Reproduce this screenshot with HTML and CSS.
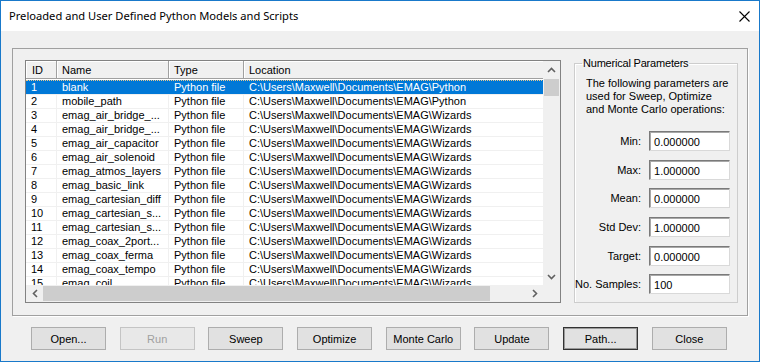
FILE: index.html
```html
<!DOCTYPE html>
<html>
<head>
<meta charset="utf-8">
<link rel="stylesheet" href="styles.css">
</head>
<body>
<div class="window">
  <div class="titlebar">
    <span class="title">Preloaded and User Defined Python Models and Scripts</span>
    <svg class="close" width="11" height="11" viewBox="0 0 11 11"><path d="M0.5 0.5L10.5 10.5M10.5 0.5L0.5 10.5" stroke="#000" stroke-width="1.1" fill="none"/></svg>
  </div>
  <div class="content">
    <div class="group">
      <div class="listview">
        <div class="lv-main">
          <div class="lv-header">
            <span class="hcell">ID</span><span class="hcell">Name</span><span class="hcell">Type</span><span class="hcell">Location</span>
          </div>
          <div class="lv-row selected"><span>1</span><span>blank</span><span>Python file</span><span>C:\Users\Maxwell\Documents\EMAG\Python</span></div>
          <div class="lv-row"><span>2</span><span>mobile_path</span><span>Python file</span><span>C:\Users\Maxwell\Documents\EMAG\Python</span></div>
          <div class="lv-row"><span>3</span><span>emag_air_bridge_...</span><span>Python file</span><span>C:\Users\Maxwell\Documents\EMAG\Wizards</span></div>
          <div class="lv-row"><span>4</span><span>emag_air_bridge_...</span><span>Python file</span><span>C:\Users\Maxwell\Documents\EMAG\Wizards</span></div>
          <div class="lv-row"><span>5</span><span>emag_air_capacitor</span><span>Python file</span><span>C:\Users\Maxwell\Documents\EMAG\Wizards</span></div>
          <div class="lv-row"><span>6</span><span>emag_air_solenoid</span><span>Python file</span><span>C:\Users\Maxwell\Documents\EMAG\Wizards</span></div>
          <div class="lv-row"><span>7</span><span>emag_atmos_layers</span><span>Python file</span><span>C:\Users\Maxwell\Documents\EMAG\Wizards</span></div>
          <div class="lv-row"><span>8</span><span>emag_basic_link</span><span>Python file</span><span>C:\Users\Maxwell\Documents\EMAG\Wizards</span></div>
          <div class="lv-row"><span>9</span><span>emag_cartesian_diff</span><span>Python file</span><span>C:\Users\Maxwell\Documents\EMAG\Wizards</span></div>
          <div class="lv-row"><span>10</span><span>emag_cartesian_s...</span><span>Python file</span><span>C:\Users\Maxwell\Documents\EMAG\Wizards</span></div>
          <div class="lv-row"><span>11</span><span>emag_cartesian_s...</span><span>Python file</span><span>C:\Users\Maxwell\Documents\EMAG\Wizards</span></div>
          <div class="lv-row"><span>12</span><span>emag_coax_2port...</span><span>Python file</span><span>C:\Users\Maxwell\Documents\EMAG\Wizards</span></div>
          <div class="lv-row"><span>13</span><span>emag_coax_ferma</span><span>Python file</span><span>C:\Users\Maxwell\Documents\EMAG\Wizards</span></div>
          <div class="lv-row"><span>14</span><span>emag_coax_tempo</span><span>Python file</span><span>C:\Users\Maxwell\Documents\EMAG\Wizards</span></div>
          <div class="lv-row"><span>15</span><span>emag_coil</span><span>Python file</span><span>C:\Users\Maxwell\Documents\EMAG\Wizards</span></div>
        </div>
        <div class="vscroll">
          <div class="sb-btn"><svg width="9" height="6" viewBox="0 0 9 6"><path d="M1 5L4.5 1.5L8 5" stroke="#606060" stroke-width="1.6" fill="none"/></svg></div>
          <div class="vthumb"></div>
          <div class="vtrack"></div>
          <div class="sb-btn"><svg width="9" height="6" viewBox="0 0 9 6"><path d="M1 1L4.5 4.5L8 1" stroke="#606060" stroke-width="1.6" fill="none"/></svg></div>
        </div>
        <div class="hscroll">
          <div class="sb-btn"><svg width="6" height="9" viewBox="0 0 6 9"><path d="M5 1L1.5 4.5L5 8" stroke="#606060" stroke-width="1.6" fill="none"/></svg></div>
          <div class="hthumb"></div>
          <div class="htrack"></div>
          <div class="sb-btn"><svg width="6" height="9" viewBox="0 0 6 9"><path d="M1 1L4.5 4.5L1 8" stroke="#606060" stroke-width="1.6" fill="none"/></svg></div>
        </div>
        <div class="corner"></div>
      </div>
      <fieldset class="params">
        <legend>Numerical Parameters</legend>
        <p class="desc">The following parameters are<br>used for Sweep, Optimize<br>and Monte Carlo operations:</p>
        <div class="fields">
          <label>Min:</label><div class="input">0.000000</div>
          <label>Max:</label><div class="input">1.000000</div>
          <label>Mean:</label><div class="input">0.000000</div>
          <label>Std Dev:</label><div class="input">1.000000</div>
          <label>Target:</label><div class="input">0.000000</div>
          <label>No. Samples:</label><div class="input">100</div>
        </div>
      </fieldset>
    </div>
    <div class="buttons">
      <button class="btn">Open...</button>
      <button class="btn" disabled>Run</button>
      <button class="btn">Sweep</button>
      <button class="btn">Optimize</button>
      <button class="btn">Monte Carlo</button>
      <button class="btn">Update</button>
      <button class="btn default">Path...</button>
      <button class="btn">Close</button>
    </div>
  </div>
</div>
</body>
</html>
```

FILE: styles.css
```css
* { box-sizing: border-box; }
html, body { margin: 0; padding: 0; }
body {
  width: 760px;
  height: 362px;
  overflow: hidden;
  font-family: "Liberation Sans", Arial, sans-serif;
  font-size: 11px;
  color: #000;
}
.window {
  width: 760px;
  height: 362px;
  border: 1px solid #1979ca;
  background: #f0f0f0;
  display: flex;
  flex-direction: column;
}
.titlebar {
  height: 30px;
  flex: none;
  background: #fff;
  display: flex;
  align-items: center;
  justify-content: space-between;
  padding: 0 9px 0 8px;
}
.title {
  font-family: "Noto Sans", sans-serif;
  font-size: 11.15px;
  color: #000;
  margin-top: -1px;
}
.close { display: block; margin-top: 1px; }
.content {
  flex: 1;
  padding-top: 17px;
}
.group {
  margin: 0 11px;
  height: 268px;
  border: 1px solid #a0a0a0;
  box-shadow: 1px 1px 0 #fff;
  display: flex;
  align-items: flex-start;
  gap: 13px;
  padding: 11px 9px 0 12px;
}
.listview {
  width: 536px;
  height: 243px;
  flex: none;
  border: 1px solid #828282;
  background: #fff;
  display: grid;
  grid-template-columns: 517px 17px;
  grid-template-rows: 224px 17px;
}
.lv-main {
  overflow: hidden;
  background: #fff;
}
.lv-header, .lv-row {
  display: grid;
  grid-template-columns: 31px 112px 75px 360px;
  width: 578px;
}
.lv-header {
  height: 18px;
  margin-bottom: 1px;
}
.hcell {
  background: #f0f0f0;
  border-right: 1px solid #a0a0a0;
  border-bottom: 1px solid #a0a0a0;
  box-shadow: inset 1px 1px 0 #fff;
  padding: 3px 0 0 5px;
  line-height: 13px;
  white-space: nowrap;
}
.hcell:first-child { padding-left: 6px; }
.lv-row {
  height: 14px;
  border-top: 1px solid #f0f0f0;
}
.lv-row span {
  line-height: 13px;
  padding-left: 5px;
  border-right: 1px solid #f0f0f0;
  white-space: nowrap;
  overflow: hidden;
}
.lv-row.selected {
  background: #0078d7;
  color: #fff;
  border-top: 1px dotted #e9c88c;
}
.lv-row.selected span { border-right-color: transparent; }
.vscroll {
  background: #f0f0f0;
  display: flex;
  flex-direction: column;
}
.hscroll {
  background: #f0f0f0;
  display: flex;
}
.sb-btn {
  width: 17px;
  height: 17px;
  flex: none;
  display: flex;
  align-items: center;
  justify-content: center;
}
.vthumb {
  height: 17px;
  margin: 1px 1px 0 1px;
  background: #cdcdcd;
}
.vtrack, .htrack { flex: 1; }
.hthumb {
  width: 447px;
  margin: 1px 0 1px 0;
  background: #cdcdcd;
}
.corner { background: #f0f0f0; }
.params {
  width: 164px;
  height: 246px;
  margin: -3px 0 0 0;
  padding: 0 10px 0 0;
  border: 1px solid #cdcdcd;
  box-shadow: inset 1px 1px 0 #fff;
  min-width: 0;
}
.params legend {
  margin-left: 7px;
  padding: 0 1px;
  line-height: 12px;
  font-size: 11px;
  letter-spacing: -0.2px;
}
.desc {
  margin: 8px 0 0 11px;
  line-height: 13px;
  white-space: nowrap;
}
.fields {
  margin-top: 15px;
  display: grid;
  grid-template-columns: 1fr 81px;
  column-gap: 8px;
  row-gap: 8.7px;
}
.fields label {
  text-align: right;
  line-height: 20px;
  white-space: nowrap;
}
.input {
  height: 20px;
  background: #fff;
  border: 1px solid;
  border-color: #7a7a7a #d9d9d9 #d9d9d9 #7a7a7a;
  box-shadow: inset 1px 1px 0 #a8a8a8;
  padding: 1px 0 0 4px;
  line-height: 18px;
}
.buttons {
  margin-top: 11px;
  padding-left: 30px;
  display: flex;
  gap: 13.7px;
}
.btn {
  width: 75px;
  height: 23px;
  font-family: "Liberation Sans", Arial, sans-serif;
  font-size: 11px;
  color: #000;
  background: #e1e1e1;
  border: 1px solid #adadad;
  padding: 0;
}
.btn:disabled {
  color: #a0a0a0;
  background: #e8e8e8;
  border-color: #c4c4c4;
}
.btn.default {
  border-color: #333;
  box-shadow: inset 0 0 0 1px #9a9a9a;
}
```
